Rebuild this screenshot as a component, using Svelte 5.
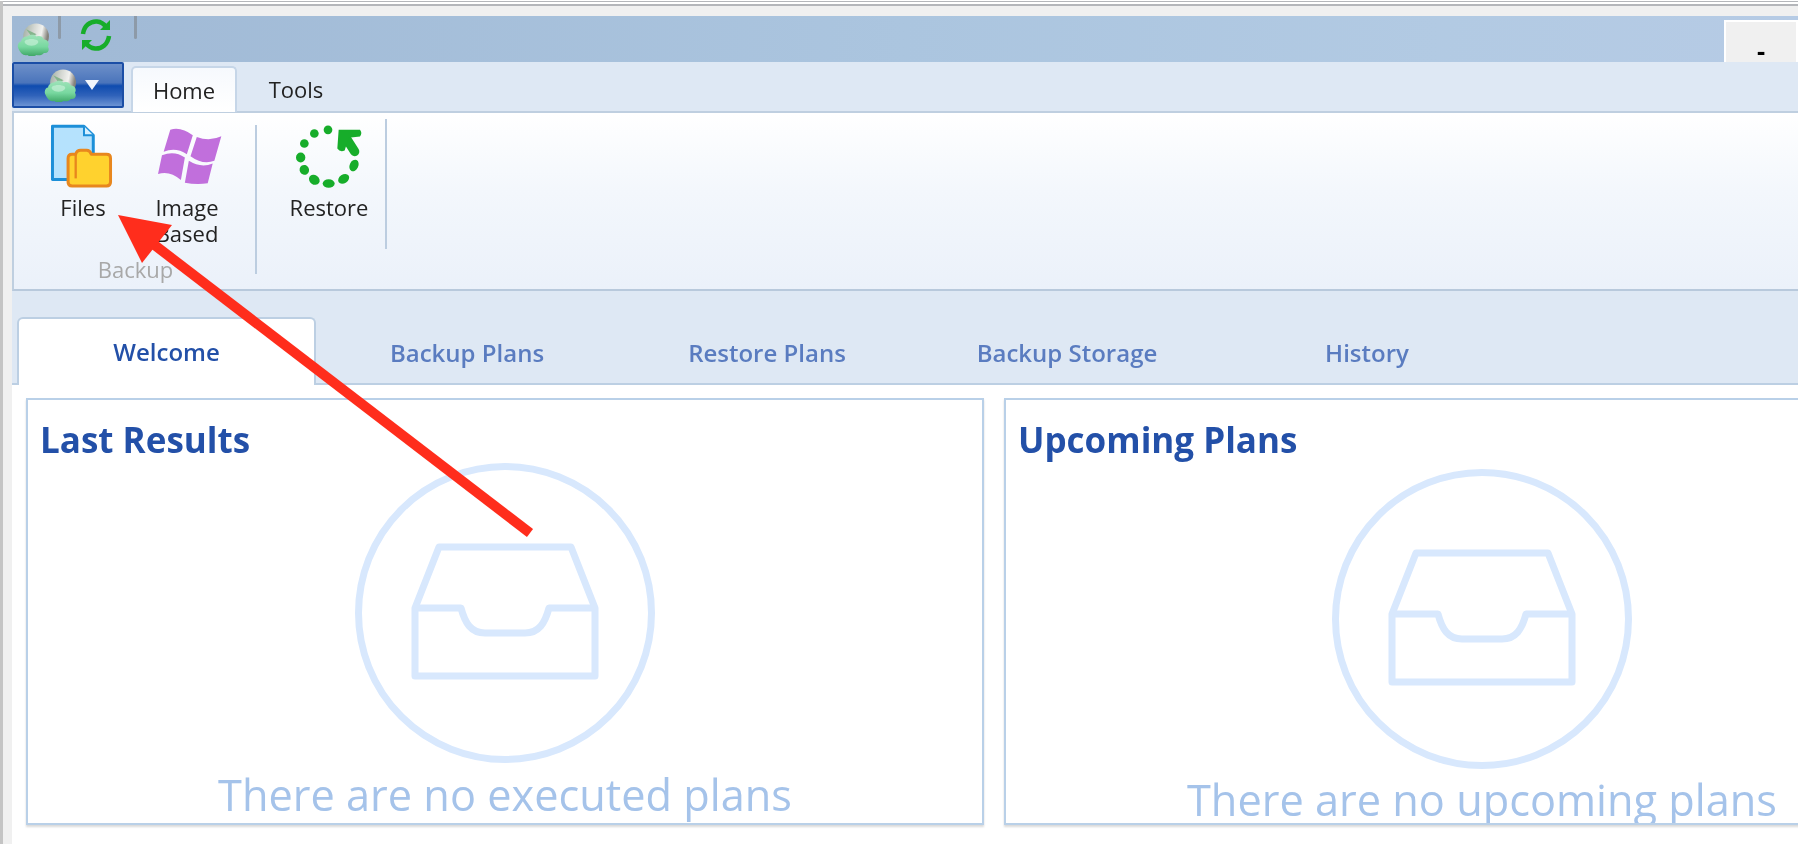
<script lang="ts">
  const viewTabs = ['Welcome', 'Backup Plans', 'Restore Plans', 'Backup Storage', 'History'];
  const restoreDots = [
    [982, 390, 13, 13, 0], [941, 401, 13, 13, 0], [911, 431, 13, 13, 0], [900, 473, 14, 15, 0],
    [911, 510, 14, 15, -30], [941, 540, 17, 14, 35], [984, 551, 18, 13, 0], [1029, 537, 18, 13, -35], [1060, 497, 18, 13, -65]
  ];
</script>

{#snippet appLogo(size)}
  <svg class="logo" width={size} height={size} viewBox="0 0 32 32">
    <defs>
      <linearGradient id="disc" x1="0" y1="0" x2="1" y2="0.2">
        <stop offset="0" stop-color="#9dab9f" />
        <stop offset="0.45" stop-color="#d5d8d3" />
        <stop offset="0.75" stop-color="#f2f2ef" />
        <stop offset="1" stop-color="#85837c" />
      </linearGradient>
      <linearGradient id="cloud" x1="0" y1="0" x2="0" y2="1">
        <stop offset="0" stop-color="#9fe2b9" />
        <stop offset="0.55" stop-color="#78d8a0" />
        <stop offset="1" stop-color="#3da565" />
      </linearGradient>
    </defs>
    <circle cx="18.500" cy="13" r="12.500" fill="url(#disc)" />
    <path d="M9 6l10 5-5 2z" fill="#86b48d" />
    <path d="M1 24c-1-3 1-6 3-6 0-3 3-5 6-5 3-2 7-2 9 0 3-1 6 0 7 3 4 0 6 4 4 7 2 3 0 7-4 6-1 2-5 3-7 2-3 2-7 2-9 0-4 1-7-2-9-7z" fill="url(#cloud)" />
    <path d="M8 17c3-2 9-2 12 0 2 2-1 5-6 5s-8-3-6-5z" fill="#c4f0d5" opacity="0.7" />
  </svg>
{/snippet}

<div class="window">
  <div class="title-bar">
    <div class="qa-icon">{@render appLogo(33)}</div>
    <span class="qa-sep"></span>
    <svg class="refresh" width="34" height="34" viewBox="0 0 34 34" fill="none" stroke="#17ad2a" stroke-width="4.500">
      <path d="M4 16C5 8 11 3 18 3.500 22 3.800 25 6 27 9" />
      <path d="M31 2V12H21Z" fill="#17ad2a" stroke="none" />
      <path d="M30 18C29 26 23 31 16 30.500 12 30.200 9 28 7 25" />
      <path d="M3 32V22H13Z" fill="#17ad2a" stroke="none" />
    </svg>
    <span class="qa-sep second"></span>
    <button class="min-btn">-</button>
  </div>

  <div class="menu-strip">
    <button class="app-btn">
      {@render appLogo(33)}
      <span class="caret"></span>
    </button>
    <div class="menu-tab active">Home</div>
    <div class="menu-tab">Tools</div>
  </div>

  <div class="ribbon">
    <div class="group first">
      <div class="items">
        <div class="item">
          <div class="icon">
            <svg class="files-icon" width="65" height="68" viewBox="145 365 195 205">
              <path d="M155 378H250L278 405V538H155Z" fill="#b5e2fd" stroke="#1c8fd8" stroke-width="9" stroke-linejoin="round" />
              <path d="M250 378V405H278" fill="#d5efff" stroke="#1c8fd8" stroke-width="6" />
              <path d="M202 475Q202 462 214 462H225Q228 450 240 450H258Q268 450 272 462H318Q330 462 330 474V546Q330 558 318 558H214Q202 558 202 546Z" fill="#ffd22e" stroke="#e8871e" stroke-width="9" stroke-linejoin="round" />
              <path d="M225 462V535" stroke="#e8871e" stroke-width="7" />
            </svg>
          </div>
          <span class="label">Files</span>
        </div>
        <div class="item">
          <div class="icon">
            <svg class="flag-icon" width="67" height="58" viewBox="470 380 200 175" fill="#c16fdc">
              <path d="M512 388Q545 378 580 405L562 462Q528 440 492 455Z" />
              <path d="M592 410Q630 425 666 408L645 482Q610 495 573 468Z" />
              <path d="M487 465Q525 450 556 472L544 540Q510 510 475 522Z" />
              <path d="M568 482Q605 505 640 490L625 550Q590 555 556 548Z" />
            </svg>
          </div>
          <span class="label">Image</span>
          <span class="label">Based</span>
        </div>
      </div>
      <div class="group-label">Backup</div>
    </div>
    <span class="ribbon-sep"></span>
    <div class="group second">
      <div class="item wide">
        <div class="icon">
          <svg class="restore-icon" width="70" height="67" viewBox="880 370 210 200" fill="#17ad2a">
            {#each restoreDots as [cx, cy, rx, ry, angle]}
              <ellipse {cx} {cy} {rx} {ry} transform="rotate({angle} {cx} {cy})" />
            {/each}
            <path d="M1062 455L1030 405" stroke="#17ad2a" stroke-width="28" stroke-linecap="round" />
            <path d="M1014 390H1078Q1086 400 1078 410L1044 414 1032 452Q1018 458 1010 446Z" />
          </svg>
        </div>
        <span class="label">Restore</span>
      </div>
    </div>
    <span class="ribbon-sep short"></span>
  </div>

  <div class="view-tabs">
    {#each viewTabs as tab, i}
      <div class="view-tab" class:active={i === 0}>{tab}</div>
    {/each}
  </div>

  <div class="content">
    <section class="panel">
      <h2>Last Results</h2>
      <svg class="empty-icon" width="300" height="300" viewBox="0 0 300 300" fill="none" stroke="#d8e8fd" stroke-width="7" stroke-linejoin="round">
        <circle cx="150" cy="150" r="146.500" />
        <path d="M60 145L84 84H216L240 145V213H60Z" />
        <path d="M60 145H106C110 160 116 170 130 170H170C184 170 190 160 194 145H240" />
      </svg>
      <p>There are no executed plans</p>
    </section>
    <section class="panel upcoming">
      <h2>Upcoming Plans</h2>
      <svg class="empty-icon" width="300" height="300" viewBox="0 0 300 300" fill="none" stroke="#d8e8fd" stroke-width="7" stroke-linejoin="round">
        <circle cx="150" cy="150" r="146.500" />
        <path d="M60 145L84 84H216L240 145V213H60Z" />
        <path d="M60 145H106C110 160 116 170 130 170H170C184 170 190 160 194 145H240" />
      </svg>
      <p>There are no upcoming plans</p>
    </section>
  </div>

  <svg class="annotation" width="1798" height="844" viewBox="0 0 1798 844">
    <path d="M530 533L148 240" stroke="#ff2d1c" stroke-width="10" />
    <path d="M118 215L172 225L142 263Z" fill="#ff2d1c" />
  </svg>
</div>

<style>
  :global(body) {
    margin: 0;
    overflow: hidden;
  }
  .window {
    position: relative;
    width: 1798px;
    height: 844px;
    box-sizing: border-box;
    overflow: hidden;
    padding: 16px 0 0 12px;
    background: #f0f0f0;
    border-top: 1px solid #fff;
    font-family: "Open Sans", "Noto Sans", sans-serif;
    filter: blur(0.4px);
  }
  .window::before {
    content: "";
    position: absolute;
    left: 0;
    top: 0;
    right: 0;
    height: 5px;
    border-top: 1px solid #b4b6ba;
    border-bottom: 2px solid #b4b6ba;
    box-sizing: border-box;
    background: #fff;
  }
  .window::after {
    content: "";
    position: absolute;
    left: 0;
    top: 0;
    bottom: 0;
    width: 3px;
    background: #c4c4c4;
  }
  .title-bar {
    display: flex;
    align-items: flex-start;
    height: 46px;
    margin-top: -1px;
    background: linear-gradient(90deg, #a0b9d5 0%, #abc5df 50%, #b2cae3 80%, #b6cbe5 100%);
  }
  .qa-icon {
    margin: 7px 0 0 5px;
    height: 33px;
  }
  .qa-sep {
    width: 3px;
    height: 23px;
    margin-left: 8px;
    background: #8d9aa8;
    border-radius: 0 0 2px 2px;
  }
  .qa-sep.second {
    margin-left: 21px;
  }
  .refresh {
    margin: 2px 0 0 18px;
  }
  .min-btn {
    width: 74px;
    height: 42px;
    margin: 4px 0 0 auto;
    padding: 18px 0 0 0;
    box-sizing: border-box;
    background: #f0f0f0;
    border: 2px solid #fff;
    border-bottom: none;
    font: bold 26px/20px "Liberation Sans", sans-serif;
    color: #000;
  }
  .menu-strip {
    display: flex;
    align-items: flex-end;
    height: 49px;
    background: #dee8f4;
  }
  .app-btn {
    display: flex;
    align-items: center;
    justify-content: center;
    gap: 8px;
    width: 112px;
    height: 46px;
    margin: 0 7px 3px 0;
    padding: 0 0 0 6px;
    box-sizing: border-box;
    border: 2px solid #1b4ea6;
    border-radius: 2px;
    background: linear-gradient(180deg, #6d90c9 0%, #4a74bb 45%, #0f4caf 52%, #2f62ba 75%, #6b93d4 100%);
  }
  .caret {
    width: 0;
    height: 0;
    border-left: 7px solid transparent;
    border-right: 7px solid transparent;
    border-top: 10px solid #f2f6fc;
  }
  .menu-tab {
    box-sizing: border-box;
    height: 46px;
    width: 118px;
    padding-top: 9px;
    text-align: center;
    font-size: 22px;
    line-height: 30px;
    color: #222;
    position: relative;
    z-index: 1;
  }
  .menu-tab.active {
    width: 106px;
    padding-top: 7px;
    background: linear-gradient(180deg, #f6f9fd, #fff);
    border: 2px solid #c6d6e8;
    border-bottom: none;
    border-radius: 5px 5px 0 0;
    margin-bottom: -1px;
  }
  .ribbon {
    display: flex;
    align-items: flex-start;
    height: 180px;
    box-sizing: border-box;
    border: 2px solid #bfcfe0;
    border-right: none;
    border-bottom-color: #b8c9dc;
    background: linear-gradient(180deg, #fff 0%, #f3f7fc 45%, #ebf1fa 100%);
  }
  .group {
    height: 176px;
  }
  .group.first {
    width: 241px;
    position: relative;
  }
  .items {
    display: flex;
    padding-left: 17px;
  }
  .item {
    display: flex;
    flex-direction: column;
    align-items: center;
    width: 104px;
    padding-top: 9px;
    font-size: 22px;
    line-height: 26px;
    color: #222;
    text-align: center;
  }
  .item.wide {
    width: 112px;
    margin-left: 16px;
  }
  .label {
    display: block;
  }
  .icon {
    display: flex;
    justify-content: center;
    height: 72px;
  }
  .flag-icon {
    margin: 5px 0 0 4px;
  }
  .files-icon {
    margin-left: -4px;
  }
  .restore-icon {
    margin-top: 1px;
  }
  .group-label {
    position: absolute;
    left: 2px;
    right: 0;
    top: 143px;
    text-align: center;
    font-size: 22px;
    line-height: 26px;
    color: #a8a8a8;
  }
  .ribbon-sep {
    width: 2px;
    height: 149px;
    margin-top: 12px;
    background: #bccde0;
  }
  .ribbon-sep.short {
    height: 130px;
    margin-top: 6px;
  }
  .group.second {
    width: 128px;
  }
  .view-tabs {
    display: flex;
    align-items: flex-end;
    height: 94px;
    box-sizing: border-box;
    padding-left: 5px;
    background: #dee8f4;
    border-bottom: 2px solid #bccfe3;
  }
  .view-tab {
    width: 300px;
    height: 60px;
    box-sizing: border-box;
    text-align: center;
    font-size: 24px;
    font-weight: 600;
    line-height: 60px;
    color: #5a7cc0;
  }
  .view-tab.active {
    width: 299px;
    height: 68px;
    line-height: 66px;
    margin: 0 1px -2px 0;
    background: #fff;
    color: #2350a8;
    border: 2px solid #bccfe3;
    border-bottom: none;
    border-radius: 6px 6px 0 0;
  }
  .content {
    display: grid;
    grid-template-columns: 958px 956px;
    gap: 20px;
    height: 459px;
    box-sizing: border-box;
    padding: 13px 0 0 14px;
    background: #fff;
  }
  .panel {
    display: flex;
    flex-direction: column;
    align-items: center;
    position: relative;
    height: 427px;
    box-sizing: border-box;
    overflow: hidden;
    border: 2px solid #b9d0e8;
    box-shadow: 0 2px 2px rgba(0, 0, 0, 0.15);
  }
  h2 {
    flex: none;
    align-self: flex-start;
    margin: 0;
    padding: 19px 0 0 12px;
    height: 63px;
    box-sizing: border-box;
    font-size: 35px;
    font-weight: 700;
    line-height: 42px;
    color: #2350a8;
    white-space: nowrap;
  }
  .empty-icon {
    flex: none;
  }
  p {
    flex: none;
    margin: 2px 0 0;
    font-size: 43.300px;
    line-height: 60px;
    color: #a5c3ea;
    white-space: nowrap;
  }
  .upcoming .empty-icon {
    margin-top: 6px;
  }
  .upcoming p {
    margin-top: 1px;
  }
  .annotation {
    position: absolute;
    left: 0;
    top: -1px;
    pointer-events: none;
  }
</style>
